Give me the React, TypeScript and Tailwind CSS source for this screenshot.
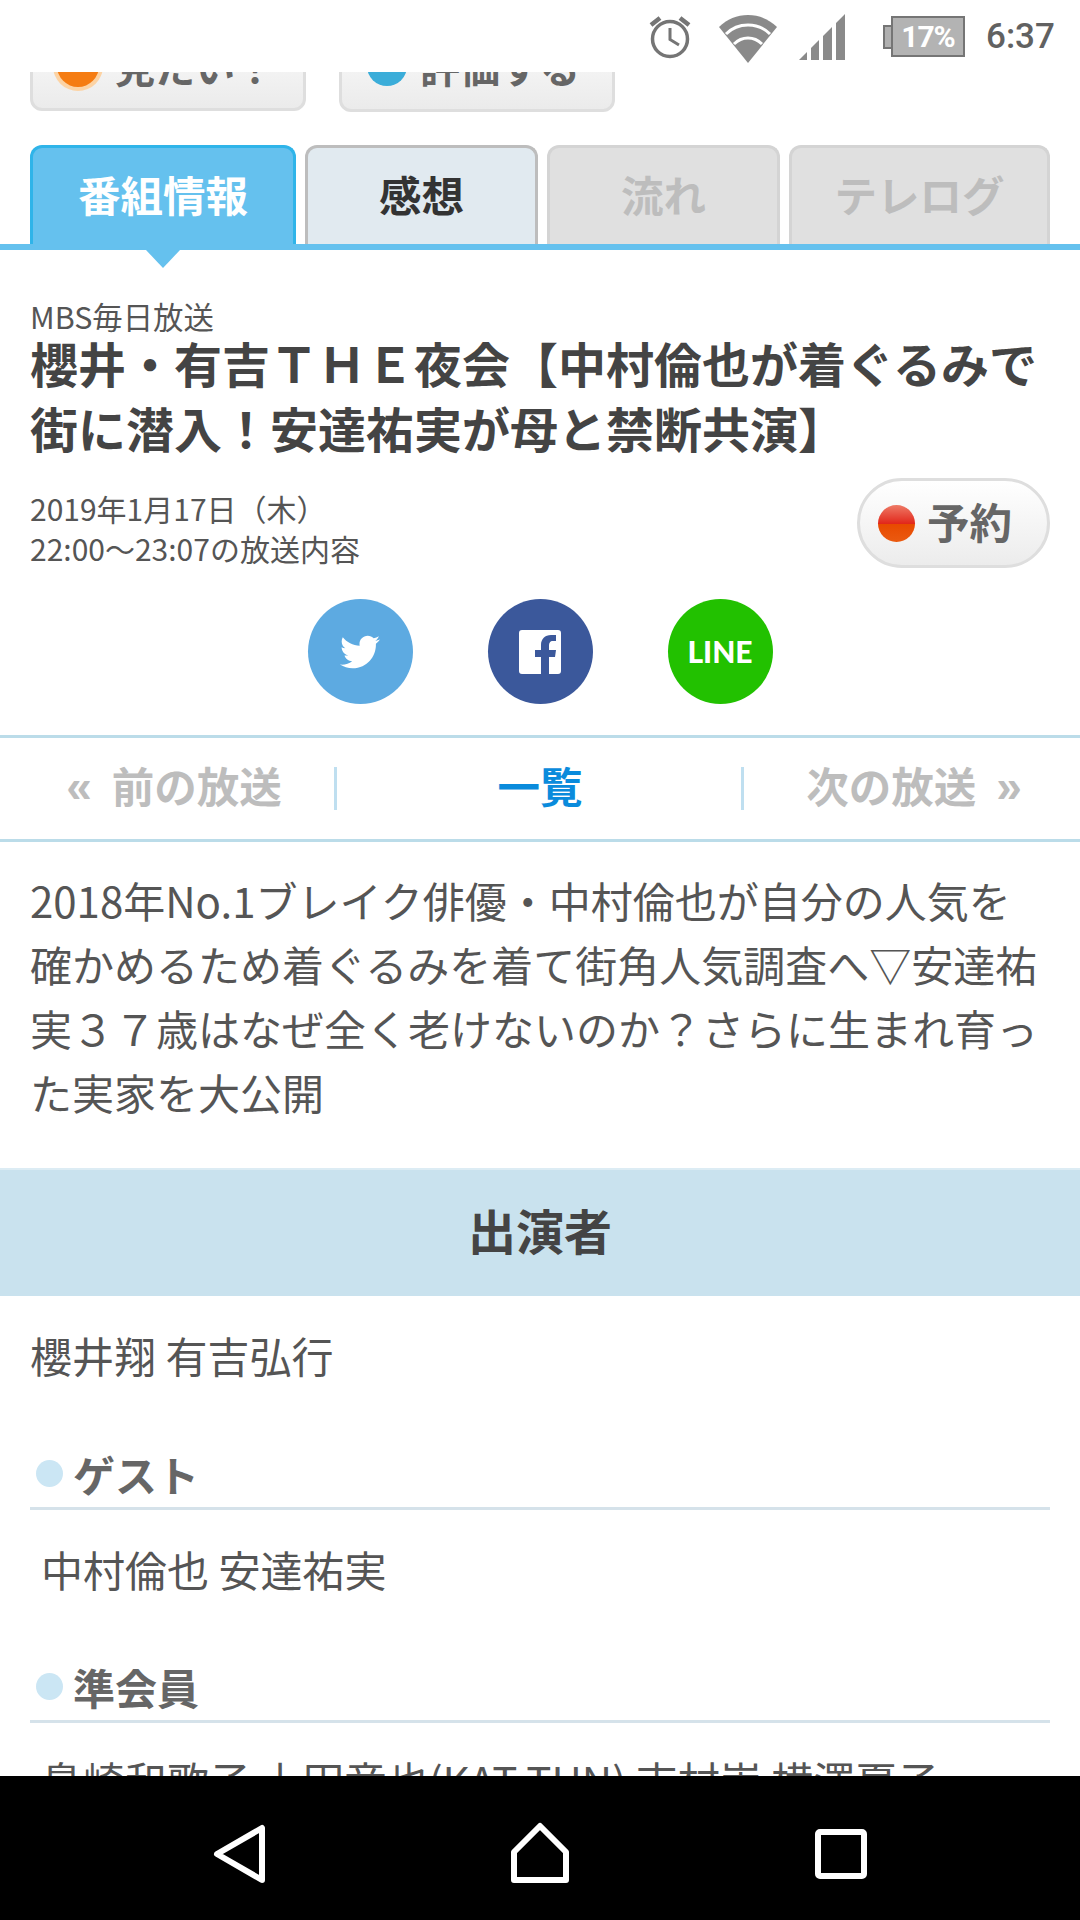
import React from 'react';
import { FaTwitter } from 'react-icons/fa';

const jp = '[font-family:"Noto_Sans_CJK_JP","Noto_Sans",sans-serif]';

const StatusBar: React.FC = () => (
    <div className="h-[72px] flex-shrink-0 bg-white flex items-center justify-end relative z-10">
        <svg width="44" height="46" viewBox="0 0 44 46" className="absolute left-[648px] top-[14px]" fill="none" stroke="#757575">
            <circle cx="22" cy="25" r="17.5" strokeWidth="3.5" />
            <path d="M22 14v11.5l9 5.5" strokeWidth="3" />
            <path d="M3 11 12 4M41 11l-9-7" strokeWidth="4.5" />
        </svg>
        <svg width="60" height="50" viewBox="0 0 60 50" className="absolute left-[718px] top-[14px]">
            <path d="M30 49 1 13C9 5 19 1 30 1s21 4 29 12Z" fill="#8a8a8a" />
            <path d="M8 20C14 14 22 11 30 11s16 3 22 9M16 30c4-4 9-6 14-6s10 2 14 6" fill="none" stroke="#fff" strokeWidth="3" />
        </svg>
        <svg width="46" height="46" viewBox="0 0 46 46" className="absolute left-[799px] top-[14px]" fill="#8a8a8a">
            <path d="M0 46 8 38v8ZM12 34l8-8v20h-8ZM24 22l9-9v33h-9ZM37 9l9-9v46h-9Z" />
        </svg>
        <div className="absolute left-[883px] top-[15px] h-[43px] w-[82px] flex items-center">
            <div className="w-[8px] h-[24px] bg-[#b0b0b0] border-2 border-r-0 border-[#757575]" />
            <div className="w-[74px] h-[41px] bg-[#b3b3b3] border-2 border-[#757575] flex items-center justify-center text-white font-bold text-[30px] tracking-[-1px] [font-family:Roboto,sans-serif]">17%</div>
        </div>
        <div className="absolute left-[986px] top-[15px] text-[35px] leading-[44px] font-medium text-[#616161] [font-family:Roboto,sans-serif]">6:37</div>
    </div>
);

const TopButtons: React.FC = () => (
    <div className="flex items-start px-[30px] gap-[33px] -mt-[61px] h-[100px] text-[40px] font-bold text-[#666666]">
        <div className="h-[100px] w-[276px] rounded-[12px] border-[3px] border-[#dedede] bg-gradient-to-b from-white to-[#ebebeb] flex items-center pl-[24px] pt-[9px] gap-[16px]">
            <span className="w-[42px] h-[42px] rounded-full bg-[#f57c12] ring-[4px] ring-[#fcd3a4] flex-shrink-0" />
            <span className="whitespace-nowrap leading-none">見たい！</span>
        </div>
        <div className="h-[101px] w-[276px] rounded-[12px] border-[3px] border-[#dedede] bg-gradient-to-b from-white to-[#ebebeb] flex items-center pl-[25px] pt-[9px] gap-[13px]">
            <span className="w-[40px] h-[40px] rounded-full bg-[#3badd9] flex-shrink-0" />
            <span className="whitespace-nowrap leading-none">評価する</span>
        </div>
    </div>
);

const Tabs: React.FC = () => (
    <div className="mt-[34px] relative">
        <div className="flex px-[30px] gap-[9px] h-[99px] items-stretch text-[42.5px] font-bold">
            <div className="w-[266px] rounded-t-[12px] border-[3px] border-b-0 border-[#2fb4e9] bg-[#65c1ee] text-white flex items-center justify-center pb-[4px]">番組情報</div>
            <div className="w-[233px] rounded-t-[12px] border-[3px] border-b-0 border-[#bdbdbd] bg-[#e1eaf0] text-[#333333] flex items-center justify-center pb-[4px]">感想</div>
            <div className="w-[233px] rounded-t-[12px] border-[3px] border-b-0 border-[#d4d4d4] bg-[#e0e0e0] text-[#bdbdbd] flex items-center justify-center pb-[4px]">流れ</div>
            <div className="w-[261px] rounded-t-[12px] border-[3px] border-b-0 border-[#d4d4d4] bg-[#e0e0e0] text-[#bdbdbd] flex items-center justify-center pb-[4px]">テレログ</div>
        </div>
        <div className="h-[6px] bg-[#65c1ee]" />
        <div className="absolute left-[146px] top-[105px] w-0 h-0 border-l-[17px] border-r-[17px] border-t-[18px] border-l-transparent border-r-transparent border-t-[#65c1ee]" />
    </div>
);

const SocialIcons: React.FC = () => (
    <div className="mt-[31px] flex justify-center gap-[75px]">
        <div className="w-[105px] h-[105px] rounded-full bg-[#5daae1] flex items-center justify-center">
            <FaTwitter className="text-white w-[40px] h-[40px]" />
        </div>
        <div className="w-[105px] h-[105px] rounded-full bg-[#3b589b] flex items-center justify-center">
            <svg width="42" height="44" viewBox="0 0 42 44">
                <path d="M3 0h36a3 3 0 0 1 3 3v38a3 3 0 0 1-3 3H30V27h6l1-7h-7v-4c0-3 1-5 4-5h3V5h-5c-6 0-10 4-10 10v5h-6v7h6v17H3a3 3 0 0 1-3-3V3a3 3 0 0 1 3-3Z" fill="#fff" />
            </svg>
        </div>
        <div className="w-[105px] h-[105px] rounded-full bg-[#22c100] flex items-center justify-center text-white font-black text-[30px] [font-family:Lato,sans-serif]">LINE</div>
    </div>
);

const PagerNav: React.FC = () => (
    <div className="mt-[31px] h-[107px] border-y-[3px] border-[#bbdce9] flex items-center text-[42.5px] font-bold">
        <div className="w-[337px] h-[43px] border-r-[3px] border-[#bfdff0] flex items-center justify-center gap-[20px] pl-[14px] pb-[6px] text-[#bdbdbd] leading-none">
            <span className="text-[46px] [font-family:'Liberation_Sans',sans-serif]">«</span><span>前の放送</span>
        </div>
        <div className="w-[407px] h-[43px] border-r-[3px] border-[#bfdff0] flex items-center justify-center pl-[2px] pb-[6px] text-[#0a8bdc] leading-none">一覧</div>
        <div className="flex-1 h-[43px] flex items-center justify-center gap-[20px] pl-[4px] pb-[6px] text-[#bdbdbd] leading-none">
            <span>次の放送</span><span className="text-[46px] [font-family:'Liberation_Sans',sans-serif]">»</span>
        </div>
    </div>
);

const SubHeading: React.FC<{ label: string }> = ({ label }) => (
    <div className="mx-[30px] h-[62px] pb-[8px] border-b-[3px] border-[#d5e2ea] flex items-center gap-[10px] text-[42px] font-bold text-[#666666]">
        <span className="w-[27px] h-[27px] ml-[6px] rounded-full bg-[#cbe6f4] flex-shrink-0" />
        <span className="leading-none">{label}</span>
    </div>
);

export default function App() {
    return (
        <div className={`w-[1080px] h-[1920px] bg-white flex flex-col overflow-hidden text-[#444444] ${jp}`}>
            <StatusBar />
            <main className="flex-1 overflow-hidden">
                <TopButtons />
                <Tabs />
                <section className="px-[30px] pt-[46px]">
                    <div className="text-[30.4px] leading-[40px] text-[#555555]">MBS毎日放送</div>
                    <h1 className="text-[48px] leading-[65px] font-bold text-[#444444] -mt-[6px] whitespace-nowrap">櫻井・有吉ＴＨＥ夜会【中村倫也が着ぐるみで<br />街に潜入！安達祐実が母と禁断共演】</h1>
                    <div className="mt-[18px] flex justify-between items-start">
                        <div className="text-[30px] leading-[40px] text-[#555555] pt-[10px]">
                            <div>2019年1月17日（木）</div>
                            <div>22:00～23:07の放送内容</div>
                        </div>
                        <div className="w-[193px] h-[90px] rounded-[45px] border-[3px] border-[#dedede] bg-gradient-to-b from-white to-[#ececec] flex items-center pl-[18px] gap-[12px]">
                            <span className="w-[37px] h-[37px] rounded-full bg-[linear-gradient(to_bottom,#ee7a66_0%,#e2281c_50%,#e84a00_52%,#ea5a10_100%)]" />
                            <span className="text-[42.5px] font-bold text-[#666666] leading-none pb-[4px]">予約</span>
                        </div>
                    </div>
                </section>
                <SocialIcons />
                <PagerNav />
                <p className="px-[30px] pt-[26px] pb-[1px] text-[42px] leading-[64px] text-[#555555]">2018年No.1ブレイク俳優・中村倫也が自分の人気を確かめるため着ぐるみを着て街角人気調査へ▽安達祐実３７歳はなぜ全く老けないのか？さらに生まれ育った実家を大公開</p>
                <h2 className="mt-[43px] h-[128px] pb-[8px] bg-[#c9e2ee] border-t-[2px] border-[#dcecf4] flex items-center justify-center text-[48px] font-bold text-[#444444]">出演者</h2>
                <div className="px-[30px] pt-[35px] text-[42px] leading-[48px] text-[#555555]">櫻井翔 有吉弘行</div>
                <div className="mt-[69px]"><SubHeading label="ゲスト" /></div>
                <div className="px-[41px] pt-[35px] text-[42px] leading-[48px] text-[#555555]">中村倫也 安達祐実</div>
                <div className="mt-[68px]"><SubHeading label="準会員" /></div>
                <div className="px-[41px] pt-[33px] text-[42px] leading-[48px] text-[#555555] whitespace-nowrap">島崎和歌子 上田竜也(KAT-TUN) 吉村崇 横澤夏子</div>
            </main>
            <nav className="h-[144px] flex-shrink-0 bg-black relative">
                <svg width="60" height="60" viewBox="0 0 60 60" className="absolute left-[212px] top-[48px]" fill="none" stroke="#fff" strokeWidth="6" strokeLinejoin="round">
                    <path d="M50 4v52L5 30Z" />
                </svg>
                <svg width="60" height="62" viewBox="0 0 60 62" className="absolute left-[510px] top-[46px]" fill="none" stroke="#fff" strokeWidth="6" strokeLinejoin="round">
                    <path d="M30 4 56 30v28H4V30Z" />
                </svg>
                <svg width="54" height="54" viewBox="0 0 54 54" className="absolute left-[814px] top-[52px]" fill="none" stroke="#fff" strokeWidth="6" strokeLinejoin="round">
                    <rect x="4" y="4" width="46" height="44" rx="2" />
                </svg>
            </nav>
        </div>
    );
}
